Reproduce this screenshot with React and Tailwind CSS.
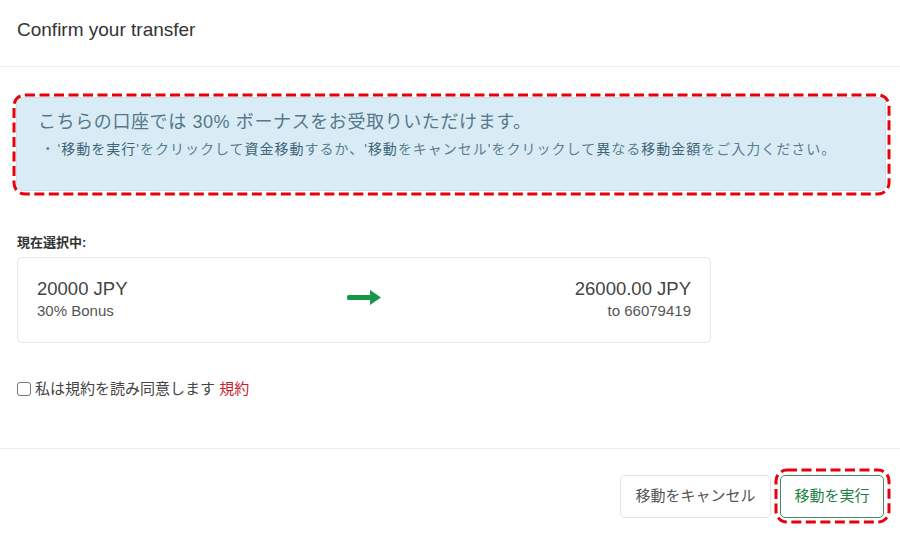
import { useState } from 'react'

function DashedFrame({ className, children }) {
  return (
    <div className={`relative ${className}`}>
      {children}
      <svg className="pointer-events-none absolute inset-[1.5px] h-[calc(100%-3px)] w-[calc(100%-3px)] overflow-visible">
        <rect
          x="0"
          y="0"
          width="100%"
          height="100%"
          rx="11"
          fill="none"
          stroke="#e8000b"
          strokeWidth="3"
          strokeDasharray="10 4.5"
        />
      </svg>
    </div>
  )
}

export default function App() {
  const [agreed, setAgreed] = useState(false)

  return (
    <div
      className="min-h-screen w-[900px] bg-white text-[#333333]"
      style={{ fontFamily: '"Liberation Sans", "Noto Sans CJK JP", sans-serif' }}
    >
      {/* HEADER */}
      <div className="flex h-[67px] items-center border-b border-[#eeeeee] px-[17px] pb-[6px]">
        <h1 className="text-[19px] text-[#333333]">Confirm your transfer</h1>
      </div>

      {/* BONUS NOTICE */}
      <DashedFrame className="ml-[12px] mr-[10px] mt-[26px] p-[4px]">
        <div className="h-[94px] rounded-[6px] border border-[#c4e2ef] bg-[#d9ecf5] px-[21px] pt-[11px]">
          <p className="text-[18px] leading-[26px] tracking-[0.6px] text-[#55788c]">
            こちらの口座では 30% ボーナスをお受取りいただけます。
          </p>
          <ul className="mt-[5px] pl-[8px] text-[14px] leading-[18px] tracking-[1px] text-[#5b7d90]">
            <li className="flex items-center gap-[7px]">
              <span className="text-[10px]">•</span>
              <span>
                '<span className="text-[#3f6477]">移動を実行</span>'をクリックして
                <span className="text-[#3f6477]">資金移動</span>するか、'
                <span className="text-[#3f6477]">移動</span>をキャンセル'をクリックして
                <span className="text-[#3f6477]">異</span>なる
                <span className="text-[#3f6477]">移動金額</span>をご入力ください。
              </span>
            </li>
          </ul>
        </div>
      </DashedFrame>

      {/* CURRENT SELECTION */}
      <div className="px-[17px] pt-[40px]">
        <p className="text-[13px] font-bold leading-[16px] text-[#333333]">現在選択中:</p>
        <div className="mt-[6px] flex h-[86px] w-[694px] items-center justify-between rounded-[5px] border border-[#e6e6e6] px-[19px]">
          <div className="mb-[3px] w-[200px]">
            <p className="text-[18.5px] leading-[21px] text-[#444444]">20000 JPY</p>
            <p className="mt-[3px] text-[15px] leading-[17px] text-[#555555]">30% Bonus</p>
          </div>
          <svg width="34" height="15" viewBox="0 0 34 15" className="mb-[5px]">
            <path d="M1.5 5 H23 V0 L34 7.5 L23 15 V10 H1.5 Q0 10 0 8.5 V6.5 Q0 5 1.5 5 Z" fill="#17974a" />
          </svg>
          <div className="mb-[3px] w-[200px] text-right">
            <p className="text-[18.5px] leading-[21px] text-[#444444]">26000.00 JPY</p>
            <p className="mt-[3px] text-[15px] leading-[17px] text-[#555555]">to 66079419</p>
          </div>
        </div>
      </div>

      {/* TERMS */}
      <label className="mt-[35px] flex items-center gap-[4px] px-[17px] text-[15px] text-[#444444]">
        <input
          type="checkbox"
          checked={agreed}
          onChange={(e) => setAgreed(e.target.checked)}
          className="h-[14px] w-[14px] appearance-none rounded-[3px] border border-[#767676] bg-white"
        />
        <span>
          私は規約を読み同意します <span className="text-[#c9202a]">規約</span>
        </span>
      </label>

      {/* FOOTER */}
      <div className="mt-[47px] flex items-center justify-end gap-[3px] border-t border-[#eeeeee] pr-[10px] pt-[20px]">
        <button
          type="button"
          className="h-[43px] w-[151px] rounded-[5px] border border-[#e3e3e3] bg-white text-[15px] text-[#555555]"
        >
          移動をキャンセル
        </button>
        <DashedFrame className="p-[6px]">
          <button
            type="button"
            className="block h-[43px] w-[104px] rounded-[5px] border border-[#3f8a5f] bg-white text-[15px] text-[#1e7f45]"
          >
            移動を実行
          </button>
        </DashedFrame>
      </div>
    </div>
  )
}
